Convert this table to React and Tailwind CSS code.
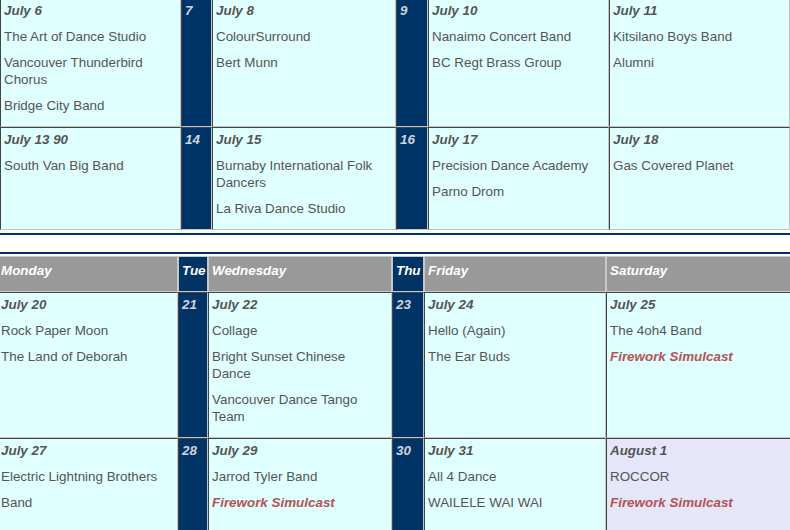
import React from 'react';

const NAVY = 'bg-[#003366]';

const topRows = [
  [
    { date: 'July 6', items: ['The Art of Dance Studio', 'Vancouver Thunderbird Chorus', 'Bridge City Band'] },
    { num: '7' },
    { date: 'July 8', items: ['ColourSurround', 'Bert Munn'] },
    { num: '9' },
    { date: 'July 10', items: ['Nanaimo Concert Band', 'BC Regt Brass Group'] },
    { date: 'July 11', items: ['Kitsilano Boys Band', 'Alumni'] },
  ],
  [
    { date: 'July 13 90', items: ['South Van Big Band'] },
    { num: '14' },
    { date: 'July 15', items: ['Burnaby International Folk Dancers', 'La Riva Dance Studio'] },
    { num: '16' },
    { date: 'July 17', items: ['Precision Dance Academy', 'Parno Drom'] },
    { date: 'July 18', items: ['Gas Covered Planet'] },
  ],
];

const headers = ['Monday', 'Tue', 'Wednesday', 'Thu', 'Friday', 'Saturday'];

const FW = { text: 'Firework Simulcast', special: true };

const bottomRows = [
  [
    { date: 'July 20', items: ['Rock Paper Moon', 'The Land of Deborah'] },
    { num: '21' },
    { date: 'July 22', items: ['Collage', 'Bright Sunset Chinese Dance', 'Vancouver Dance Tango Team'] },
    { num: '23' },
    { date: 'July 24', items: ['Hello (Again)', 'The Ear Buds'] },
    { date: 'July 25', items: ['The 4oh4 Band', FW] },
  ],
  [
    { date: 'July 27', items: ['Electric Lightning Brothers', 'Band'], last: true },
    { num: '28', last: true },
    { date: 'July 29', items: ['Jarrod Tyler Band', FW], last: true },
    { num: '30', last: true },
    { date: 'July 31', items: ['All 4 Dance', 'WAILELE WAI WAI'], last: true },
    { date: 'August 1', items: ['ROCCOR', FW], lavender: true, last: true },
  ],
];

const cellBorder = 'border border-t-[#444] border-l-[#444] border-b-[#c4c4c4] border-r-[#c4c4c4]';

const DayCell = ({ cell }) => {
  if (cell.num) {
    return (
      <div className={`${cellBorder} ${NAVY} px-[3px] pt-[3px] font-bold italic text-[#d0d4dc] leading-[17px]`}>
        {cell.num}
      </div>
    );
  }
  return (
    <div
      className={`${cellBorder} ${cell.lavender ? 'bg-[#e6e6fa]' : 'bg-[#e0ffff]'} ${cell.last ? 'min-h-[110px]' : ''} pl-[3px] pr-[8px] pt-[3px] pb-[12px] leading-[17px]`}
    >
      <div className="font-bold italic text-[#555]">{cell.date}</div>
      {cell.items.map((it, i) =>
        typeof it === 'string' ? (
          <p key={i} className="mt-[9px] text-[#555]">{it}</p>
        ) : (
          <p key={i} className="mt-[9px] font-bold italic text-[#b55353]">{it.text}</p>
        )
      )}
    </div>
  );
};

const App = () => {
  return (
    <div className="w-[790px] h-[530px] overflow-hidden bg-white text-[13.4px] font-['Liberation_Sans',Arial,sans-serif]">
      {/* first weeks */}
      <div className="-mt-[2px] grid grid-cols-[181px_31px_184px_32px_181px_181px]">
        {topRows.map((row, r) => row.map((cell, c) => <DayCell key={`${r}-${c}`} cell={cell} />))}
      </div>

      <div className="mt-[3px] h-[2px] bg-[#003366]"></div>
      <div className="mt-[17px] h-[2px] bg-[#003366]"></div>

      {/* next weeks */}
      <div className="mt-[2px] -ml-[3px] grid grid-cols-[181px_30px_184px_32px_182px_186px]">
        {headers.map((h) => (
          <div
            key={h}
            className={`border border-[#c8c8c8] ${h.length === 3 ? NAVY : 'bg-[#999999]'} px-[3px] pt-[5px] pb-[12px] leading-[17px] font-bold italic text-white`}
          >
            {h}
          </div>
        ))}
        {bottomRows.map((row, r) => row.map((cell, c) => <DayCell key={`b${r}-${c}`} cell={cell} />))}
      </div>
    </div>
  );
};

export default App;
